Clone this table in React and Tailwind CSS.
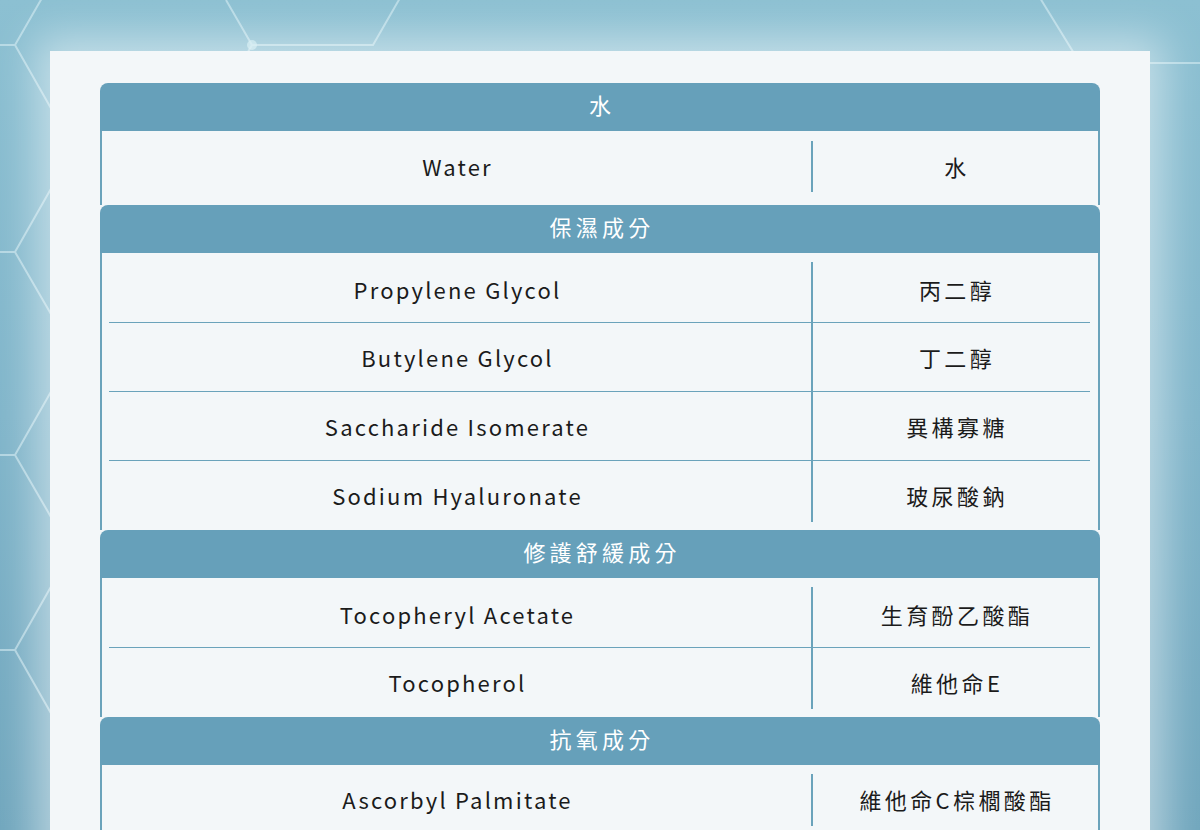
import React from 'react';

const sections = [
  { title: '水', rows: [['Water', '水']], tall: true },
  {
    title: '保濕成分',
    rows: [
      ['Propylene Glycol', '丙二醇'],
      ['Butylene Glycol', '丁二醇'],
      ['Saccharide Isomerate', '異構寡糖'],
      ['Sodium Hyaluronate', '玻尿酸鈉'],
    ],
  },
  {
    title: '修護舒緩成分',
    rows: [
      ['Tocopheryl Acetate', '生育酚乙酸酯'],
      ['Tocopherol', '維他命E'],
    ],
  },
  { title: '抗氧成分', rows: [['Ascorbyl Palmitate', '維他命C棕櫚酸酯']] },
];

function HexLines() {
  // decorative hexagon network behind the panel
  const s = 'rgba(220,240,246,0.55)';
  return (
    <svg className="absolute inset-0" width="1200" height="830" viewBox="0 0 1200 830">
      <g stroke={s} strokeWidth="2" fill="none">
        <path d="M0 45 H15 L42 -2 M15 45 L73 147 H193 L252 45 L226 0 M252 45 H373 L400 -2" />
        <path d="M0 252 H15 L73 150 M15 252 L73 352" />
        <path d="M0 455 H15 L73 353 M15 455 L73 555" />
        <path d="M0 650 H15 L73 548 M15 650 L73 752" />
        <path d="M1040 -2 L1080 63 H1200" />
      </g>
      <circle cx="252" cy="45" r="5" fill="rgba(200,232,240,0.7)" />
    </svg>
  );
}

function Row({ en, zh, first, last, tall }) {
  return (
    <div
      className={
        tall
          ? 'flex h-[74px] pb-[3px]'
          : first && !last
          ? 'flex h-[69px] pt-[3px]'
          : first || last
          ? 'flex h-[69px]'
          : 'flex h-[68px]'
      }
    >
      <div className="flex w-[709px] items-center justify-center pl-[2px] tracking-[2.2px]">{en}</div>
      <div
        className={
          tall
            ? 'mt-[10px] mb-[10px] w-[2px] bg-[#6aa3bb]'
            : first && last
            ? 'mt-[9px] mb-[8px] w-[2px] bg-[#6aa3bb]'
            : first
            ? 'mt-[6px] w-[2px] bg-[#6aa3bb]'
            : last
            ? 'mb-[8px] w-[2px] bg-[#6aa3bb]'
            : 'w-[2px] bg-[#6aa3bb]'
        }
      />
      <div className="flex flex-1 items-center justify-center pl-[3px] tracking-[3.4px]">{zh}</div>
    </div>
  );
}

export default function App() {
  return (
    <div className="relative h-[830px] w-full overflow-hidden bg-gradient-to-b from-[#8cc0d2] via-[#80b5ca] to-[#70a6bd] font-['Noto_Sans_CJK_TC','Noto_Sans',sans-serif]">
      <HexLines />
      <div className="relative mx-[50px] mt-[51px] h-[900px] bg-[#f3f7f9] px-[50px] pt-[32px] shadow-[0_0_40px_14px_rgba(255,255,255,0.5)]">
        <div className="flex flex-col">
          {sections.map((sec) => (
            <div key={sec.title} className="flex flex-col">
              <div className="flex h-[48px] items-center justify-center rounded-t-[8px] bg-[#66a0ba] pb-[5px] pl-[4px] text-[22px] tracking-[4.2px] text-white">
                {sec.title}
              </div>
              <div className="flex flex-col border-x-2 border-[#6aa3bb] text-[22px] text-[#1b1b1b]">
                {sec.rows.map(([en, zh], i) => (
                  <React.Fragment key={en}>
                    {i > 0 && <div className="ml-[7px] mr-[8px] h-px bg-[#6aa3bb]" />}
                    <Row
                      en={en}
                      zh={zh}
                      first={i === 0}
                      last={i === sec.rows.length - 1}
                      tall={sec.tall}
                    />
                  </React.Fragment>
                ))}
              </div>
            </div>
          ))}
        </div>
      </div>
    </div>
  );
}
